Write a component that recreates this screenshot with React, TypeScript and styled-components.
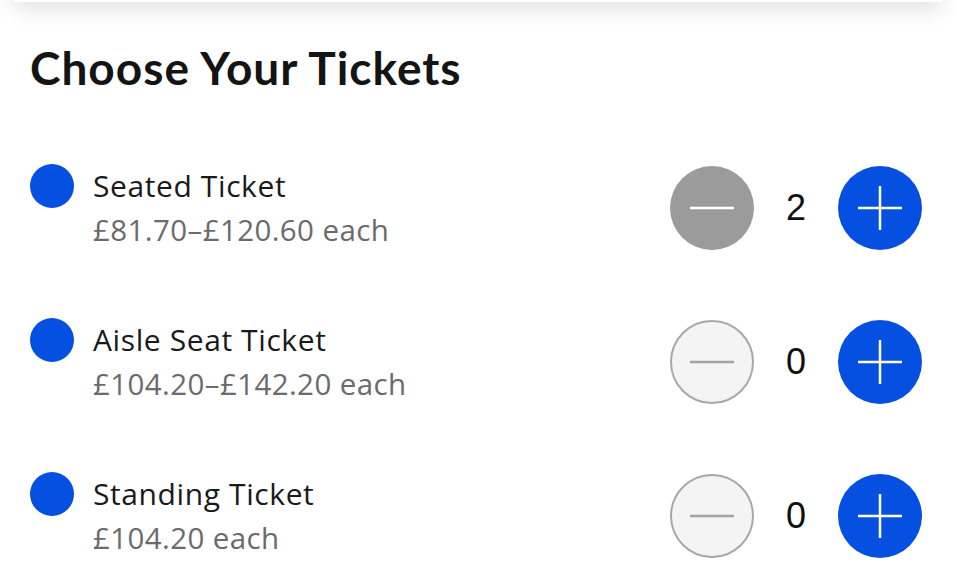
import styled, { createGlobalStyle } from 'styled-components';

const GlobalStyle = createGlobalStyle`
  html, body { margin: 0; padding: 0; background: #fff; overflow: hidden; }
  * { box-sizing: border-box; }
`;

const Page = styled.div`
  width: 956px;
  height: 588px;
  overflow: hidden;
  background: #fff;
  font-family: "Open Sans", "Noto Sans", sans-serif;
`;

const TopBar = styled.div`
  height: 44px;
  margin: -42px 14px 0;
  background: #fff;
  box-shadow: 0 6px 22px rgba(0, 0, 0, 0.13);
`;

const Section = styled.section`
  padding: 0 34px 0 30px;
`;

const Title = styled.h2`
  margin: 38px 0 0;
  font-family: Lato, "Noto Sans", sans-serif;
  font-size: 46px;
  font-weight: 700;
  letter-spacing: 1px;
  color: #141414;
  line-height: 56px;
`;

const List = styled.div`
  margin-top: 68px;
  display: flex;
  flex-direction: column;
  gap: 66px;
`;

const Row = styled.div`
  display: flex;
  align-items: center;
  justify-content: space-between;
`;

const Left = styled.div`
  display: flex;
  align-items: flex-start;
  gap: 19px;
`;

const Dot = styled.span`
  width: 44px;
  height: 44px;
  border-radius: 50%;
  background: #0550e0;
  flex-shrink: 0;
`;

const Info = styled.div`
  display: flex;
  flex-direction: column;
`;

const Name = styled.div`
  font-size: 30px;
  letter-spacing: 0.6px;
  line-height: 44px;
  color: #1a1a1a;
`;

const Price = styled.div`
  font-size: 29.5px;
  letter-spacing: 0.4px;
  line-height: 44px;
  color: #6b6b6b;
`;

const Stepper = styled.div`
  display: flex;
  align-items: center;
`;

const RoundButton = styled.button<{ $variant: 'plus' | 'minus' | 'minusOff' }>`
  width: 84px;
  height: 84px;
  border-radius: 50%;
  padding: 0;
  display: flex;
  align-items: center;
  justify-content: center;
  cursor: pointer;
  background: ${(p) => (p.$variant === 'plus' ? '#0550e0' : p.$variant === 'minus' ? '#9b9b9b' : '#f4f4f4')};
  border: ${(p) => (p.$variant === 'minusOff' ? '2px solid #a8a8a8' : 'none')};
  color: ${(p) => (p.$variant === 'minusOff' ? '#a3a3a3' : '#fff')};
`;

const Count = styled.span`
  width: 84px;
  text-align: center;
  font-family: "Liberation Sans", Arial, sans-serif;
  font-size: 36px;
  color: #111;
`;

const MinusIcon = () => (
  <svg width="44" height="44" viewBox="0 0 44 44">
    <line x1="0" y1="22" x2="44" y2="22" stroke="currentColor" strokeWidth="2.5" />
  </svg>
);

const PlusIcon = () => (
  <svg width="44" height="44" viewBox="0 0 44 44">
    <line x1="0" y1="22" x2="44" y2="22" stroke="currentColor" strokeWidth="2.5" />
    <line x1="22" y1="0" x2="22" y2="44" stroke="currentColor" strokeWidth="2.5" />
  </svg>
);

const tickets = [
  { name: 'Seated Ticket', price: '£81.70–£120.60 each', count: 2 },
  { name: 'Aisle Seat Ticket', price: '£104.20–£142.20 each', count: 0 },
  { name: 'Standing Ticket', price: '£104.20 each', count: 0 },
];

export default function App() {
  return (
    <Page>
      <GlobalStyle />
      <TopBar />
      <Section>
        <Title>Choose Your Tickets</Title>
        <List>
          {tickets.map((t) => (
            <Row key={t.name}>
              <Left>
                <Dot />
                <Info>
                  <Name>{t.name}</Name>
                  <Price>{t.price}</Price>
                </Info>
              </Left>
              <Stepper>
                <RoundButton $variant={t.count > 0 ? 'minus' : 'minusOff'} aria-label="Remove ticket">
                  <MinusIcon />
                </RoundButton>
                <Count>{t.count}</Count>
                <RoundButton $variant="plus" aria-label="Add ticket">
                  <PlusIcon />
                </RoundButton>
              </Stepper>
            </Row>
          ))}
        </List>
      </Section>
    </Page>
  );
}
